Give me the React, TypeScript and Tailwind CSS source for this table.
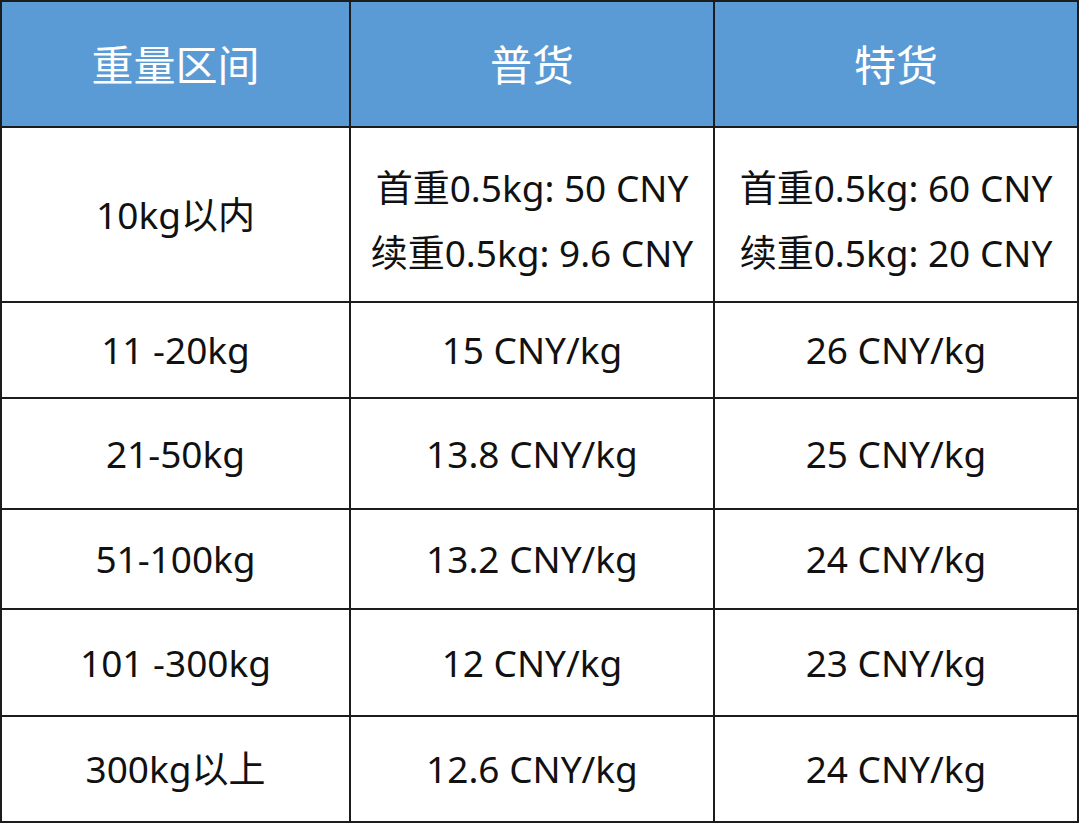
import React from "react";

const rows: { h: number; cells: React.ReactNode[] }[] = [
  {
    h: 175,
    cells: [
      "10kg以内",
      <div className="flex flex-col items-center leading-[65px] pt-[10px]">
        <span>首重0.5kg: 50 CNY</span>
        <span>续重0.5kg: 9.6 CNY</span>
      </div>,
      <div className="flex flex-col items-center leading-[65px] pt-[10px]">
        <span>首重0.5kg: 60 CNY</span>
        <span>续重0.5kg: 20 CNY</span>
      </div>,
    ],
  },
  { h: 96, cells: ["11 -20kg", "15 CNY/kg", "26 CNY/kg"] },
  { h: 111, cells: ["21-50kg", "13.8 CNY/kg", "25 CNY/kg"] },
  { h: 100, cells: ["51-100kg", "13.2 CNY/kg", "24 CNY/kg"] },
  { h: 107, cells: ["101 -300kg", "12 CNY/kg", "23 CNY/kg"] },
  { h: 104, cells: ["300kg以上", "12.6 CNY/kg", "24 CNY/kg"] },
];

const font = {
  fontFamily: '"Noto Sans", "Noto Sans CJK SC", sans-serif',
};

export default function App() {
  return (
    <div className="w-[1080px] h-[823px] bg-white" style={font}>
      <div className="w-[1079px] border-2 border-[#1c1c1c] grid grid-cols-[349px_364px_362px]">
        {["重量区间", "普货", "特货"].map((t, i) => (
          <div
            key={t}
            className={`h-[126px] bg-[#5b9bd5] text-white text-[42px] flex items-center justify-center border-b-2 border-[#1c1c1c] ${i < 2 ? "border-r-2" : ""}`}
          >
            {t}
          </div>
        ))}
        {rows.map((r, ri) =>
          r.cells.map((c, ci) => (
            <div
              key={`${ri}-${ci}`}
              style={{ height: r.h }}
              className={`flex items-center justify-center text-[37px] text-[#111] border-[#1c1c1c] ${ci < 2 ? "border-r-2" : ""} ${ri < rows.length - 1 ? "border-b-2" : ""}`}
            >
              {c}
            </div>
          ))
        )}
      </div>
    </div>
  );
}
